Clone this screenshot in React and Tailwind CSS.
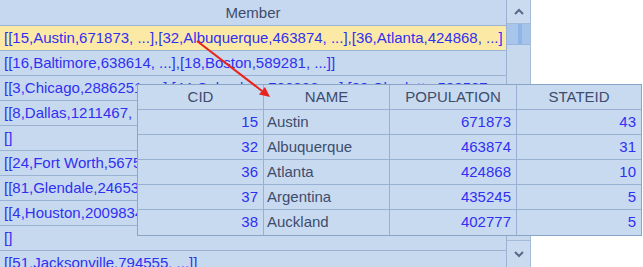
import React from "react";

const rows = [
  { t: "[[15,Austin,671873, ...],[32,Albuquerque,463874, ...],[36,Atlanta,424868, ...]", sel: true },
  { t: "[[16,Baltimore,638614, ...],[18,Boston,589281, ...]]" },
  { t: "[[3,Chicago,2886251, ...],[44,Columbus,736836, ...],[88,Charlotte,598587, ...]]" },
  { t: "[[8,Dallas,1211467, ...],[21,Denver,560415, ...]]" },
  { t: "[]" },
  { t: "[[24,Fort Worth,567516, ...]]" },
  { t: "[[81,Glendale,246531, ...]]" },
  { t: "[[4,Houston,2009834, ...]]" },
  { t: "[]" },
  { t: "[[51,Jacksonville,794555, ...]]" },
  { t: "[[12,Kansas City,441545, ...]]" },
];

const pop = [
  ["15", "Austin", "671873", "43"],
  ["32", "Albuquerque", "463874", "31"],
  ["36", "Atlanta", "424868", "10"],
  ["37", "Argentina", "435245", "5"],
  ["38", "Auckland", "402777", "5"],
];

export default function App() {
  return (
    <div className="relative w-[643px] h-[267px] overflow-hidden bg-white font-['Liberation_Sans',Arial,sans-serif] text-[15px] leading-none">
      <div className="flex w-[531px] h-[300px]">
        <div className="w-[507px] flex flex-col bg-[#c7d9ef] border-r border-[#9ab3d3]">
          <div className="h-[26px] shrink-0 border-b border-[#9ab3d3] flex items-center justify-center pb-[1px] text-[#3e4c6c] bg-[#c6d8ef]">
            Member
          </div>
          {rows.map((r, i) => (
            <div
              key={i}
              className={`h-[25px] shrink-0 border-b border-[#9ab3d3] flex items-center pl-[4px] pb-[2px] overflow-hidden whitespace-nowrap text-[#3030f2] ${r.sel ? "bg-[#fde9a6]" : ""}`}
            >
              {r.t}
            </div>
          ))}
        </div>
        <div className="w-[24px] flex flex-col bg-[#c8d9ee] border-r border-[#a5bcd8]">
          <div className="h-[24px] shrink-0 border-b border-[#a5bcd8] flex items-center justify-center bg-[#cadbf0]">
            <svg width="12" height="8" viewBox="0 0 12 8">
              <polyline points="2,6 6,2 10,6" fill="none" stroke="#5a6a86" strokeWidth="2" />
            </svg>
          </div>
          <div className="h-[21px] shrink-0 flex bg-[#a8c4ea] border-b border-[#9ab6dc]">
            <div className="w-[11px] bg-[#a9c5eb]" />
            <div className="w-[4px] bg-[#8fb4e6]" />
            <div className="flex-1 bg-[#a6c3ea]" />
          </div>
          <div className="h-[196px] shrink-0 border-b border-[#a5bcd8]" />
          <div className="h-[26px] shrink-0 flex items-center justify-center bg-[#cadbf0]">
            <svg width="12" height="8" viewBox="0 0 12 8">
              <polyline points="2,2 6,6 10,2" fill="none" stroke="#5a6a86" strokeWidth="2" />
            </svg>
          </div>
        </div>
      </div>

      <div className="absolute left-[137px] top-[84px] w-[505px] border border-[#8aa4c6] bg-[#c8daf0]">
        <div className="grid grid-cols-[126px_126px_127px_124px] h-[25px] border-b border-[#98b1d2] text-[#3e4c6c]">
          <div className="border-r border-[#98b1d2] flex items-center justify-center pb-[2px]">CID</div>
          <div className="border-r border-[#98b1d2] flex items-center justify-center pb-[2px]">NAME</div>
          <div className="border-r border-[#98b1d2] flex items-center justify-center pb-[2px]">POPULATION</div>
          <div className="flex items-center justify-center pb-[2px]">STATEID</div>
        </div>
        {pop.map((p, i) => (
          <div
            key={i}
            className={`grid grid-cols-[126px_126px_127px_124px] h-[25px] ${i < pop.length - 1 ? "border-b" : ""} border-[#98b1d2]`}
          >
            <div className="border-r border-[#98b1d2] flex items-center justify-end pr-[5px] pb-[2px] text-[#3030f2]">{p[0]}</div>
            <div className="border-r border-[#98b1d2] flex items-center pl-[3px] pb-[2px] text-[#3e4c6c]">{p[1]}</div>
            <div className="border-r border-[#98b1d2] flex items-center justify-end pr-[5px] pb-[2px] text-[#3030f2]">{p[2]}</div>
            <div className="flex items-center justify-end pr-[5px] pb-[2px] text-[#3030f2]">{p[3]}</div>
          </div>
        ))}
      </div>

      <svg className="absolute left-0 top-0 pointer-events-none" width="643" height="267">
        <line x1="197" y1="41" x2="262" y2="91" stroke="#e8231d" strokeWidth="2" />
        <polygon points="270,97 259,94.5 265,87" fill="#e8231d" />
      </svg>
    </div>
  );
}
